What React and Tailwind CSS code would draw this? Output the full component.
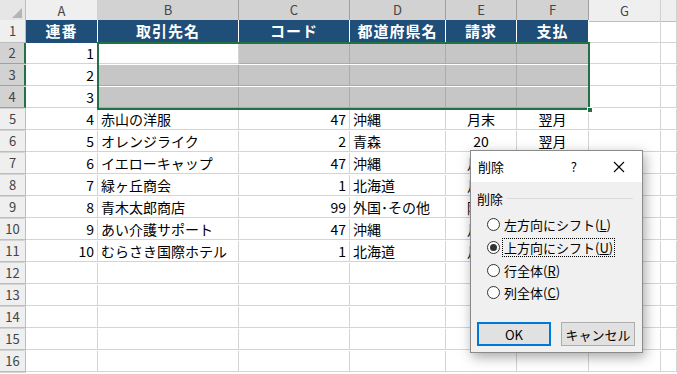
import React from 'react'

const FONT = { fontFamily: '"Noto Sans CJK JP", "Noto Sans", sans-serif' }

const COLS = ['A', 'B', 'C', 'D', 'E', 'F', 'G', '']
const HEAD = ['連番', '取引先名', 'コード', '都道府県名', '請求', '支払']

const ROWS = [
  ['1', '', '', '', '', ''],
  ['2', '', '', '', '', ''],
  ['3', '', '', '', '', ''],
  ['4', '赤山の洋服', '47', '沖縄', '月末', '翌月'],
  ['5', 'オレンジライク', '2', '青森', '20', '翌月'],
  ['6', 'イエローキャップ', '47', '沖縄', '月末', '翌月'],
  ['7', '緑ヶ丘商会', '1', '北海道', '月末', '翌月'],
  ['8', '青木太郎商店', '99', '外国･その他', '随時', '翌月'],
  ['9', 'あい介護サポート', '47', '沖縄', '月末', '翌月'],
  ['10', 'むらさき国際ホテル', '1', '北海道', '月末', '翌月'],
  ['', '', '', '', '', ''],
  ['', '', '', '', '', ''],
  ['', '', '', '', '', ''],
  ['', '', '', '', '', ''],
  ['', '', '', '', '', ''],
]

const ALIGN = ['justify-end pr-[3px]', 'justify-start pl-[3px]', 'justify-end pr-[3px]', 'justify-start pl-[3px]', 'justify-center', 'justify-center']

const GRID = 'grid grid-cols-[26px_72px_141px_111px_96px_71px_72px_72px_1fr]'

function Radio({ label, checked }) {
  return (
    <div className="flex items-center h-[22.7px] pl-[16px]">
      <span className="w-[13px] h-[13px] rounded-full border border-[#333] bg-white flex items-center justify-center">
        {checked && <span className="w-[7px] h-[7px] rounded-full bg-[#333]" />}
      </span>
      <span className={`ml-[3px] px-[1px] text-[13px] leading-[17px] text-[#000] ${checked ? 'outline outline-1 outline-dotted outline-[#000]' : ''}`}>
        {label}
      </span>
    </div>
  )
}

function DeleteDialog() {
  return (
    <div className="absolute left-[470px] top-[150px] w-[173px] h-[203px] border border-[#8a8a8a] bg-[#f0f0f0] shadow-[2px_4px_12px_rgba(0,0,0,0.35)] flex flex-col" style={FONT}>
      <div className="h-[31px] bg-white flex items-center pl-[7px] pr-[17px] text-[13px] text-[#000]">
        <span>削除</span>
        <span className="ml-auto mr-[36px]">?</span>
        <svg width="12" height="12" viewBox="0 0 12 12"><path d="M1 1 L11 11 M11 1 L1 11" stroke="#000" strokeWidth="1.1" fill="none" /></svg>
      </div>
      <div className="flex items-center pl-[6px] pr-[9px] mt-[7px] text-[13px] text-[#000]">
        <span>削除</span>
        <span className="flex-1 h-px bg-[#dcdcdc] ml-[4px]" />
      </div>
      <div className="mt-[5px] flex flex-col">
        <Radio label={<>左方向にシフト(<u>L</u>)</>} />
        <Radio label={<>上方向にシフト(<u>U</u>)</>} checked />
        <Radio label={<>行全体(<u>R</u>)</>} />
        <Radio label={<>列全体(<u>C</u>)</>} />
      </div>
      <div className="flex gap-[10px] pl-[6px] mt-[18px]">
        <button className="w-[74px] h-[24px] border-2 border-[#0078d7] bg-[#e1e1e1] text-[13px] text-[#000]">OK</button>
        <button className="w-[74px] h-[24px] border border-[#adadad] bg-[#e1e1e1] text-[13px] text-[#000]">キャンセル</button>
      </div>
    </div>
  )
}

export default function App() {
  return (
    <div className="relative w-[677px] h-[374px] overflow-hidden bg-white select-none" style={FONT}>
      {/* column letters */}
      <div className={`${GRID} h-[20px]`}>
        <div className="bg-[#e6e6e6] border-r border-b border-[#bdbdbd] flex items-end justify-end p-[3px]">
          <svg width="10" height="10" viewBox="0 0 10 10"><path d="M10 0 L10 10 L0 10 Z" fill="#b4b4b4" /></svg>
        </div>
        {COLS.map((c, i) => {
          const sel = i >= 1 && i <= 5
          return (
            <div key={i} className={`flex items-center justify-center text-[13px] text-[#444] border-r ${sel ? 'bg-[#d2d2d2] border-[#a0a0a0] border-b-2 border-b-[#217346]' : 'bg-[#efefef] border-[#d0d0d0] border-b border-b-[#bdbdbd]'}`}>
              {c}
            </div>
          )
        })}
      </div>

      {/* row 1: header */}
      <div className={`${GRID} h-[23px]`}>
        <div className="bg-[#efefef] border-r border-b border-[#bdbdbd] flex items-center justify-center text-[13px] text-[#444]">1</div>
        {HEAD.map((h, i) => (
          <div key={i} className="bg-[#1f4e78] border-r border-white flex items-center justify-center text-[15px] font-bold text-white tracking-[1px]">
            {h}
          </div>
        ))}
        <div className="border-r border-b border-[#d4d4d4]" />
        <div className="border-r border-b border-[#d4d4d4]" />
        <div className="border-b border-[#d4d4d4]" />
      </div>

      {ROWS.map((r, ri) => {
        const n = ri + 2
        const sel = n >= 2 && n <= 4
        return (
          <div key={ri} className={`${GRID} h-[22px]`}>
            <div className={`flex items-center justify-center text-[13px] text-[#444] border-b ${sel ? 'bg-[#d2d2d2] border-[#a0a0a0] border-r-2 border-r-[#217346]' : 'bg-[#efefef] border-[#bdbdbd] border-r'}`}>
              {n}
            </div>
            {r.map((v, ci) => {
              const gray = sel && ci >= 1 && !(n === 2 && ci === 1)
              return (
                <div key={ci} className={`flex items-center border-r border-b text-[14px] text-[#000] whitespace-nowrap overflow-hidden ${ALIGN[ci]} ${gray ? 'bg-[#c6c6c6] border-[#ababab]' : 'bg-white border-[#d4d4d4]'}`}>
                  {v}
                </div>
              )
            })}
            <div className="border-r border-b border-[#d4d4d4]" />
            <div className="border-r border-b border-[#d4d4d4]" />
            <div className="border-b border-[#d4d4d4]" />
          </div>
        )
      })}

      {/* selection outline B2:F4 */}
      <div className="absolute left-[97px] top-[42px] w-[493px] h-[68px] border-2 border-[#217346] pointer-events-none" />
      <div className="absolute left-[587px] top-[107px] w-[6px] h-[6px] bg-[#217346] border border-white pointer-events-none" />

      <DeleteDialog />
    </div>
  )
}
